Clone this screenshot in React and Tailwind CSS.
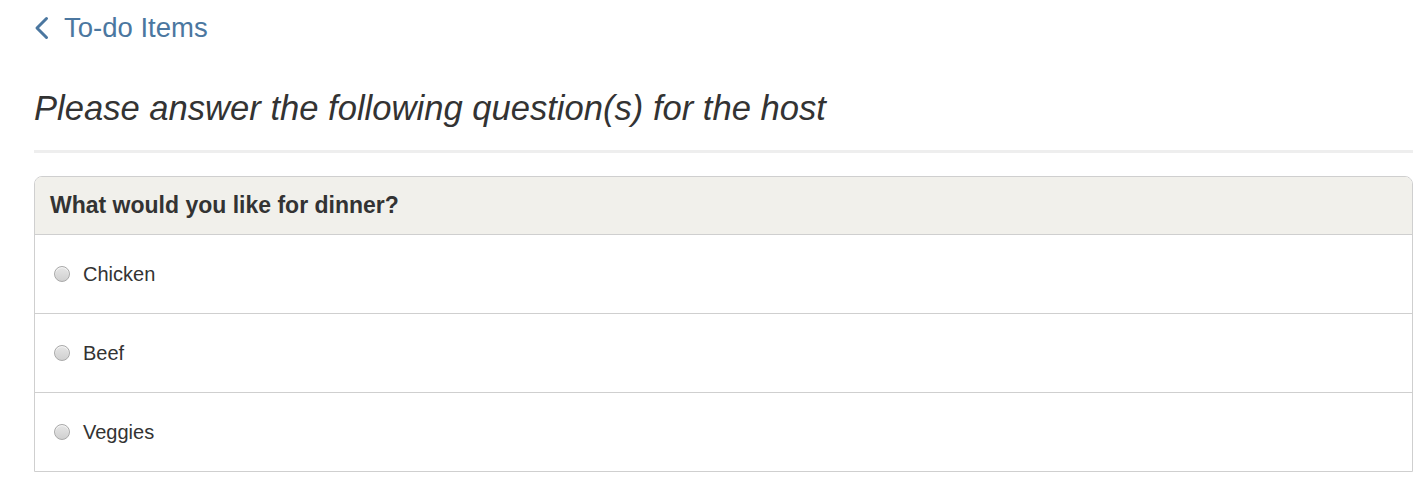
import React from "react";

const options = ["Chicken", "Beef", "Veggies"];

const Radio = () => (
  <span className="w-4 h-4 rounded-full border border-[#a9a9a9] bg-gradient-to-b from-[#e6e6e6] to-[#d0d0d0] shadow-[inset_0_1px_1px_rgba(255,255,255,0.8)] shrink-0"></span>
);

const App = () => {
  return (
    <div className="w-[1420px] h-[482px] bg-white font-['Liberation_Sans',Arial,sans-serif] text-[#333]">
      <div className="pl-[34px] pr-[7px]">
        <a className="flex items-center h-[58px] pb-[2px] text-[#4b77a0] text-[27.5px]" href="#">
          <svg width="15" height="24" viewBox="0 0 15 24" className="mr-[15px]">
            <polyline points="12.5,2.5 3,12 12.5,21.5" fill="none" stroke="#4b77a0" strokeWidth="3" strokeLinecap="round" strokeLinejoin="round" />
          </svg>
          <span>To-do Items</span>
        </a>
        <h1 className="mt-[28px] text-[34.6px] italic leading-[44px] text-[#333]">
          Please answer the following question(s) for the host
        </h1>
        <div className="mt-[20px] h-[3px] bg-[#eeeeee]"></div>
        <div className="mt-[23px] border border-[#cfcfcf] rounded-t-[8px] overflow-hidden">
          <div className="h-[58px] bg-[#f1f0eb] border-b border-[#cfcfcf] flex items-center pl-[15px] text-[23px] font-bold text-[#333]">
            What would you like for dinner?
          </div>
          {options.map((opt, i) => (
            <div
              key={opt}
              className={
                i < options.length - 1
                  ? "h-[79px] border-b border-[#cfcfcf] flex items-center pl-[19px] gap-[13px]"
                  : "h-[78px] flex items-center pl-[19px] gap-[13px]"
              }
            >
              <Radio />
              <span className="text-[20px] text-[#333]">{opt}</span>
            </div>
          ))}
        </div>
      </div>
    </div>
  );
};

export default App;
